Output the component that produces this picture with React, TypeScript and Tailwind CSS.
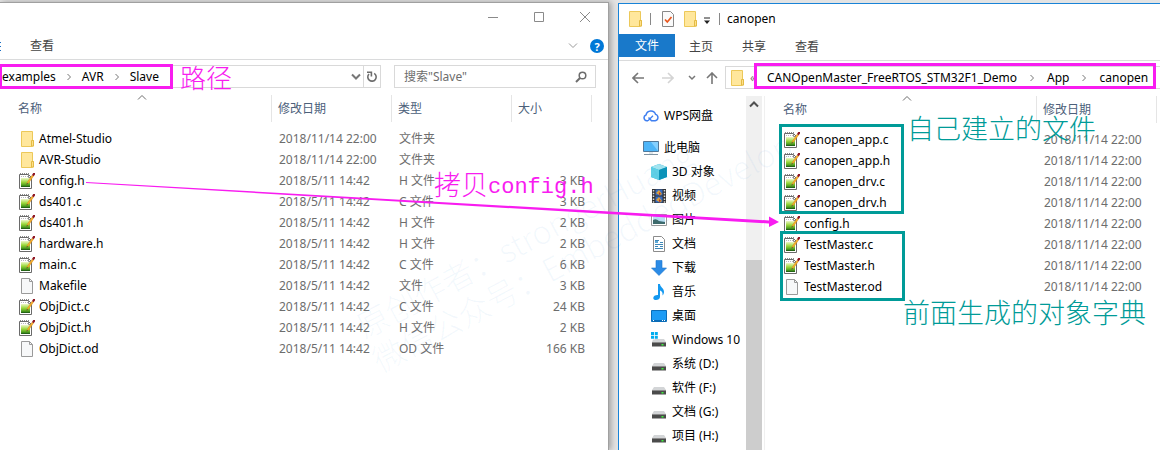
import type { ReactNode } from "react";

type Kind = "folder" | "code" | "page";
type FileRow = { name: string; kind: Kind; date: string; type?: string; size?: string };

const OLD = "2018/5/11 14:42";
const NEW = "2018/11/14 22:00";

const slaveFiles: FileRow[] = [
  { name: "Atmel-Studio", kind: "folder", date: NEW, type: "文件夹", size: "" },
  { name: "AVR-Studio", kind: "folder", date: NEW, type: "文件夹", size: "" },
  { name: "config.h", kind: "code", date: OLD, type: "H 文件", size: "3 KB" },
  { name: "ds401.c", kind: "code", date: OLD, type: "C 文件", size: "3 KB" },
  { name: "ds401.h", kind: "code", date: OLD, type: "H 文件", size: "2 KB" },
  { name: "hardware.h", kind: "code", date: OLD, type: "H 文件", size: "2 KB" },
  { name: "main.c", kind: "code", date: OLD, type: "C 文件", size: "6 KB" },
  { name: "Makefile", kind: "page", date: OLD, type: "文件", size: "3 KB" },
  { name: "ObjDict.c", kind: "code", date: OLD, type: "C 文件", size: "24 KB" },
  { name: "ObjDict.h", kind: "code", date: OLD, type: "H 文件", size: "2 KB" },
  { name: "ObjDict.od", kind: "page", date: OLD, type: "OD 文件", size: "166 KB" },
];

const masterFiles: FileRow[] = [
  { name: "canopen_app.c", kind: "code", date: NEW },
  { name: "canopen_app.h", kind: "code", date: NEW },
  { name: "canopen_drv.c", kind: "code", date: NEW },
  { name: "canopen_drv.h", kind: "code", date: NEW },
  { name: "config.h", kind: "code", date: NEW },
  { name: "TestMaster.c", kind: "code", date: NEW },
  { name: "TestMaster.h", kind: "code", date: NEW },
  { name: "TestMaster.od", kind: "page", date: NEW },
];

function FolderIcon() {
  return (
    <svg width="16" height="18" viewBox="0 0 16 18" className="shrink-0">
      <path d="M2.5 1.5h11v9h1v5.5h-1.5v.5H2.5z" fill="#ffe79c" stroke="#ecc859" />
      <path d="M12.5 16v-5.5h2V16z" fill="#ffe08a" stroke="#e3bb45" />
    </svg>
  );
}

function CodeIcon() {
  return (
    <svg width="16" height="18" viewBox="0 0 16 18" className="shrink-0">
      <defs>
        <linearGradient id="codeInk" x1="0" y1="0" x2="0" y2="1">
          <stop offset="0" stopColor="#eef8c8" />
          <stop offset="0.45" stopColor="#9bd83c" />
          <stop offset="0.8" stopColor="#4f9f1e" />
          <stop offset="1" stopColor="#134d12" />
        </linearGradient>
      </defs>
      <path d="M.5 2.500h9l3 3v11H.5z" fill="#fff" stroke="#6a6a6a" />
      <path d="M1 1.500h1M3 1.500h1M5 1.500h1M7 1.500h1M9 1.500h1" stroke="#8a8a8a" />
      <path d="M2 4.500h1M4 4.500h1M6 4.500h1M8 4.500h1" stroke="#b9b9b9" />
      <path d="M9.500 2.500v3h3" fill="none" stroke="#8a8a8a" />
      <path d="M2 6h9v9H2z" fill="url(#codeInk)" />
      <path d="M7.700 12l.8-2L13 3.200l1.500 1-4.700 6.600z" fill="#f8b02c" stroke="#c98216" strokeWidth=".4" />
      <path d="M7.500 12.800l.4-1.800 1.200.8z" fill="#444" />
      <path d="M13 3l1.200-2H16v1.500l-1.300 1.800z" fill="#8e1522" />
    </svg>
  );
}

function PageIcon() {
  return (
    <svg width="16" height="18" viewBox="0 0 16 18" className="shrink-0">
      <path d="M2.500 1.500h8l3 3v12h-11z" fill="#f7f8f9" stroke="#9a9a9a" />
      <path d="M10.500 1.500v3h3" fill="none" stroke="#9a9a9a" />
    </svg>
  );
}

function KindIcon({ kind }: { kind: Kind }) {
  if (kind === "folder") return <FolderIcon />;
  if (kind === "code") return <CodeIcon />;
  return <PageIcon />;
}

function Chevron({ d = "down", className }: { d?: "down" | "right" | "up"; className?: string }) {
  const path = d === "down" ? "M1 2.500l4 4 4-4" : d === "up" ? "M1 6.500l4-4 4 4" : "M3.500 2l3 3-3 3";
  return (
    <svg width="10" height="10" viewBox="0 0 10 10" className={className}>
      <path d={path} fill="none" stroke="currentColor" />
    </svg>
  );
}

function FileTable({ rows, full }: { rows: FileRow[]; full?: boolean }) {
  const th = "relative border-r border-[#e5e5e5] px-[6px] text-left font-normal text-[#4c607a]";
  return (
    <table className={full ? "w-[580px] table-fixed border-separate border-spacing-0" : "w-[380px] table-fixed border-separate border-spacing-0"}>
      <colgroup>
        <col className="w-[260px]" />
        <col className="w-[120px]" />
        {full && <col className="w-[120px]" />}
        {full && <col className="w-[80px]" />}
      </colgroup>
      <thead>
        <tr className="h-[27px]">
          <th className={th}>
            名称
            <Chevron d="up" className="absolute left-1/2 top-[-2px] -translate-x-1/2 text-[#6d6d6d]" />
          </th>
          <th className={th}>修改日期</th>
          {full && <th className={th}>类型</th>}
          {full && <th className={th}>大小</th>}
        </tr>
      </thead>
      <tbody className="before:block before:h-[6px]">
        {rows.map((r) => (
          <tr key={r.name} className="h-[21px] leading-5 text-[#6d6d6d]">
            <td className="p-0 pl-[7px]">
              <span className="flex items-center gap-1 text-black">
                <KindIcon kind={r.kind} />
                {r.name}
              </span>
            </td>
            <td className="p-0 pl-[7px]">{r.date}</td>
            {full && <td className="p-0 pl-[7px]">{r.type}</td>}
            {full && <td className="p-0 pr-[7px] text-right">{r.size}</td>}
          </tr>
        ))}
      </tbody>
    </table>
  );
}

function SlaveWindow() {
  return (
    <section className="relative flex min-w-0 flex-col border-r border-t border-[#a0a0a0] bg-white shadow-[2px_0_6px_rgba(0,0,0,0.3)]">
      <div className="flex h-7 items-center justify-end gap-9 pr-[18px] text-[#8a8a8a]">
        <button aria-label="最小化">
          <svg width="10" height="10" viewBox="0 0 10 10"><path d="M0 5.500h10" stroke="currentColor" /></svg>
        </button>
        <button aria-label="最大化">
          <svg width="10" height="10" viewBox="0 0 10 10"><path d="M.5.5h9v9h-9z" fill="none" stroke="currentColor" /></svg>
        </button>
        <button aria-label="关闭">
          <svg width="10" height="10" viewBox="0 0 10 10"><path d="M0 0l10 10M10 0L0 10" stroke="currentColor" /></svg>
        </button>
      </div>
      <div className="flex h-[29px] items-center border-b border-[#dadbdc] pr-1 pt-[2px]">
        <svg width="2" height="12" viewBox="0 0 2 12"><path d="M0 2.500h1M0 6.500h1M0 10.500h1" stroke="#1a6fc4" /></svg>
        <button className="ml-7 text-[#444]">查看</button>
        <Chevron className="ml-auto mr-3 text-[#9a9a9a]" />
        <button aria-label="帮助" className="flex size-[14px] items-center justify-center rounded-full bg-[#0078d7] text-[11px] font-bold leading-none text-white">?</button>
      </div>
      <div className="flex gap-[13px] pb-[7px] pr-3 pt-[5px]">
        <nav className="flex h-[23px] min-w-0 flex-1 items-center border border-l-0 border-[#d9d9d9] pl-[2px] text-black">
          <a href="#examples">examples</a>
          <Chevron d="right" className="ml-2 mr-2 text-[#777]" />
          <a href="#avr">AVR</a>
          <Chevron d="right" className="ml-2 mr-2 text-[#777]" />
          <a href="#slave">Slave</a>
          <button aria-label="历史" className="ml-auto mr-[2px]"><Chevron className="text-[#777] [&_path]:stroke-2" /></button>
          <button aria-label="刷新" className="flex h-full w-[17px] items-center justify-center border-l border-[#d9d9d9] text-[#6d6d6d]">
            <svg width="12" height="12" viewBox="0 0 12 12">
              <path d="M8.200 2.400A4.200 4.200 0 1 1 3 3" fill="none" stroke="currentColor" strokeWidth="1.600" />
              <path d="M1 1.200h4.400v4.200" fill="none" stroke="currentColor" strokeWidth="1.600" />
            </svg>
          </button>
        </nav>
        <label className="flex h-[23px] w-[202px] items-center border border-[#d9d9d9] pl-[9px] pr-2">
          <input aria-label="搜索" placeholder={'搜索"Slave"'} className="min-w-0 flex-1 bg-transparent outline-none placeholder:text-[#6d6d6d]" />
          <svg width="12" height="12" viewBox="0 0 12 12" className="text-[#6d6d6d]">
            <circle cx="7.500" cy="4.500" r="3.300" fill="none" stroke="currentColor" strokeWidth="1.500" />
            <path d="M5 7L1 11" stroke="currentColor" strokeWidth="2" />
          </svg>
        </label>
      </div>
      <div className="ml-3"><FileTable rows={slaveFiles} full /></div>
      <div className="pointer-events-none absolute left-[-1px] top-[61px] h-[25px] w-[174px] border-[3px] border-[#f81cf0]" />
      <p className="absolute left-[180px] top-[59px] text-[26px] font-light leading-8 text-[#f81cf0]">路径</p>
    </section>
  );
}

function Drive({ win }: { win?: boolean }) {
  return (
    <svg width="16" height="16" viewBox="0 0 16 16">
      {win && <path d="M0 0h3v3H0zM3.800 0h3v3h-3zM0 3.800h3v3H0zM3.800 3.800h3v3h-3z" fill="#00adef" />}
      <path d={win ? "M4 7h9l2 3H1l1-2.500h2z" : "M3 7h10l2 3H1z"} fill="#d3d5d7" />
      <path d="M1 10h14v4.500H1z" fill="#4b4b4b" />
      <path d="M1 10.500h14" stroke="#8b8b8b" />
      <path d="M10.500 12h2v1.500h-2z" fill="#3cf03c" />
    </svg>
  );
}

const places: { label: string; icon: ReactNode }[] = [
  {
    label: "3D 对象",
    icon: (
      <svg width="16" height="16" viewBox="0 0 16 16">
        <path d="M0 3l8-3 8 3v10l-8 3-8-3z" fill="#28b5d4" />
        <path d="M0 3l8-3 8 3-8 3z" fill="#a2e4f0" />
        <path d="M8 6l8-3v10l-8 3z" fill="#0b93b8" />
        <path d="M0 3l8 3v10l-8-3z" fill="#5fd0e6" />
      </svg>
    ),
  },
  {
    label: "视频",
    icon: (
      <svg width="16" height="16" viewBox="0 0 16 16">
        <path d="M1 1h14v14H1z" fill="#333" />
        <path d="M2.500 2v13M13.500 2v13" stroke="#ddd" strokeWidth="1.500" strokeDasharray="1.500 1.300" />
        <path d="M4.500 1.500h7v6h-7z" fill="#376cc4" />
        <path d="M4.500 8.500h7v6h-7z" fill="#376cc4" />
        <path d="M5 5l3-3 3 4-2 1.500zM5 12l3-3 3 4-2 1.500z" fill="#d9a13b" />
        <path d="M8 4l2 2-2 1zM8 11l2 2-2 1z" fill="#b6332c" />
      </svg>
    ),
  },
  {
    label: "图片",
    icon: (
      <svg width="16" height="16" viewBox="0 0 16 16">
        <path d="M.5 2.500h15v11H.5z" fill="#fff" stroke="#999" />
        <path d="M2 4h12v8H2z" fill="#b9dff2" />
        <path d="M2 8q3-2 6 1l6 1v2H2z" fill="#3d6a6c" />
      </svg>
    ),
  },
  {
    label: "文档",
    icon: (
      <svg width="16" height="16" viewBox="0 0 16 16">
        <path d="M2.500.5h8l3 3v12h-11z" fill="#fff" stroke="#8c8c8c" />
        <path d="M4 4.500h4M9 6.500h3M4 8.500h8M4 10.500h3M9 10.500h3M4 12.500h8" stroke="#3d88b8" />
        <path d="M4 5h3v2H4z" fill="#5ba8d6" />
      </svg>
    ),
  },
  {
    label: "下载",
    icon: (
      <svg width="16" height="16" viewBox="0 0 16 16">
        <path d="M5 .5h6V8h4.500L8 15.500.5 8H5z" fill="#2b8be6" stroke="#1b76cd" strokeWidth=".6" />
      </svg>
    ),
  },
  {
    label: "音乐",
    icon: (
      <svg width="16" height="16" viewBox="0 0 16 16">
        <path d="M7 0h2c0 3 4 4 4 8 0 1-.5 2.500-1.500 3.500C12 8 10.500 7 9 6.500V13c0 1.800-2 3-4 3-1.600 0-2.700-.8-2.700-2.100C2.300 12 4.500 10.800 7 11z" fill="#1398f0" />
      </svg>
    ),
  },
  {
    label: "桌面",
    icon: (
      <svg width="16" height="16" viewBox="0 0 16 16">
        <path d="M.5 2.500h15v11H.5z" fill="#1c9bf5" stroke="#0b6db8" />
        <path d="M1 12.500h14" stroke="#0a6cb8" />
        <path d="M2 12.500h1M11 12.500h1M13 12.500h1" stroke="#fff" />
      </svg>
    ),
  },
  { label: "Windows 10", icon: <Drive win /> },
  { label: "系统 (D:)", icon: <Drive /> },
  { label: "软件 (F:)", icon: <Drive /> },
  { label: "文档 (G:)", icon: <Drive /> },
  { label: "项目 (H:)", icon: <Drive /> },
];

function Sidebar() {
  return (
    <aside className="flex w-[146px] shrink-0 border-r border-[#f0f0f0]">
      <div className="w-[127px] overflow-hidden whitespace-nowrap pt-2 text-black">
        <a href="#wps" className="flex h-6 items-center gap-[5px] pl-6">
          <svg width="16" height="16" viewBox="0 0 16 16">
            <path d="M5 12.800H3.800A3 3 0 0 1 3 7a5 5 0 0 1 9.600-.6 3.300 3.300 0 0 1-.4 6.400H8.500L5.500 9.500" fill="none" stroke="#3f7ff0" strokeWidth="1.500" strokeLinejoin="round" />
            <path d="M5 12.800l5-5" fill="none" stroke="#3f7ff0" strokeWidth="1.300" />
          </svg>
          WPS网盘
        </a>
        <a href="#pc" className="mt-2 flex h-6 items-center gap-[5px] pl-6">
          <svg width="16" height="16" viewBox="0 0 16 16">
            <path d="M.5 1.500h15v10H.5z" fill="#4db5f8" stroke="#50789a" />
            <path d="M8 2h7v9z" fill="#84d0ff" />
            <path d="M6 12h4v2H6z" fill="#dfe6ea" />
            <path d="M1 14.500h14" stroke="#7f93a2" />
          </svg>
          此电脑
        </a>
        {places.map((p) => (
          <a key={p.label} href="#place" className="flex h-6 items-center gap-[5px] pl-8">
            {p.icon}
            {p.label}
          </a>
        ))}
      </div>
      <div className="flex w-[16px] flex-col bg-[#cdcdcd]">
        <div className="flex h-[164px] justify-center bg-[#f0f0f0] pt-1">
          <Chevron d="up" className="text-[#505050] [&_path]:stroke-2" />
        </div>
      </div>
    </aside>
  );
}

function MasterWindow() {
  return (
    <section className="relative mt-px flex min-w-0 flex-col overflow-hidden border-l border-t border-[#1883d7] bg-white">
      <div className="flex h-[30px] items-center pl-2">
        <FolderIcon />
        <span className="ml-[7px] h-3 w-px bg-[#888]" />
        <svg width="14" height="16" viewBox="0 0 14 16" className="ml-[10px]">
          <path d="M1.500.5h8l3 3v12h-11z" fill="#fafafa" stroke="#888" />
          <path d="M4 8.500l2.300 2.500L10.500 6" fill="none" stroke="#e8561d" strokeWidth="1.700" />
        </svg>
        <span className="ml-[7px] flex"><FolderIcon /></span>
        <svg width="8" height="8" viewBox="0 0 8 8" className="ml-[5px] mt-1">
          <path d="M1 1h6" stroke="#222" />
          <path d="M1 3.500h6L4 7z" fill="#222" />
        </svg>
        <span className="ml-2 h-3 w-px bg-[#888]" />
        <span className="ml-[7px] text-black">canopen</span>
      </div>
      <div className="flex h-[27px] items-start border-b border-[#dadbdc] leading-6 text-[#444]">
        <button className="h-[23px] w-14 bg-[#1979ca] text-white">文件</button>
        <button className="ml-[14px] pt-px">主页</button>
        <button className="ml-[29px] pt-px">共享</button>
        <button className="ml-[29px] pt-px">查看</button>
      </div>
      <div className="flex pb-[7px] pl-[13px] pt-[5px]">
        <div className="flex w-[93px] items-center text-[#777]">
          <svg width="12" height="12" viewBox="0 0 12 12"><path d="M12 6H1M6 1L1 6l5 5" fill="none" stroke="currentColor" strokeWidth="1.600" /></svg>
          <svg width="12" height="12" viewBox="0 0 12 12" className="ml-[18px] text-[#d4d4d4]"><path d="M0 6h11M6 1l5 5-5 5" fill="none" stroke="currentColor" strokeWidth="1.600" /></svg>
          <svg width="8" height="8" viewBox="0 0 8 8" className="ml-[14px]"><path d="M1 2l3 3 3-3" fill="none" stroke="currentColor" strokeWidth="1.500" /></svg>
          <svg width="12" height="12" viewBox="0 0 12 12" className="ml-[10px]"><path d="M6 12V1M1 6l5-5 5 5" fill="none" stroke="currentColor" strokeWidth="1.600" /></svg>
        </div>
        <nav className="flex h-[23px] min-w-0 flex-1 items-center whitespace-nowrap border border-r-0 border-[#d9d9d9] pl-[3px] text-black">
          <FolderIcon />
          <span className="ml-[5px] w-[17px] text-[#777]">«</span>
          <a href="#demo">CANOpenMaster_FreeRTOS_STM32F1_Demo</a>
          <Chevron d="right" className="ml-[10px] mr-[10px] text-[#777]" />
          <a href="#app">App</a>
          <Chevron d="right" className="ml-[10px] mr-[10px] text-[#777]" />
          <a href="#canopen">canopen</a>
        </nav>
      </div>
      <div className="flex h-[354px]">
        <Sidebar />
        <div className="relative min-w-0 flex-1 pl-3">
          <FileTable rows={masterFiles} />
          <div className="absolute left-[14px] top-[28px] h-[90px] w-[125px] border-[3px] border-[#009b98]" />
          <div className="absolute left-[15px] top-[135px] h-[70px] w-[125px] border-[3px] border-[#009b98]" />
          <p className="absolute left-[142px] top-[17px] whitespace-nowrap text-[27px] font-light leading-8 text-[#009b98]">自己建立的文件</p>
          <p className="absolute left-[138px] top-[201px] whitespace-nowrap text-[27px] font-light leading-8 text-[#009b98]">前面生成的对象字典</p>
        </div>
      </div>
      <div className="pointer-events-none absolute left-[135px] top-[59px] h-[26px] w-[402px] border-[3px] border-[#f81cf0]" />
    </section>
  );
}

export default function App() {
  return (
    <main className="relative grid h-screen min-h-[450px] grid-cols-[609fr_542fr] gap-[9px] overflow-hidden bg-[#e3e3e3] pt-[2px] font-['Noto_Sans','Noto_Sans_CJK_SC',sans-serif] text-xs">
      <SlaveWindow />
      <MasterWindow />
      <div className="pointer-events-none absolute inset-0 font-['Noto_Sans_CJK_SC',sans-serif] text-[32px] font-light leading-10 text-[#3c82d2]/6">
        <p className="absolute left-[358px] top-[307px] origin-left rotate-[-28deg] whitespace-nowrap">原创作者：strongerHuang</p>
        <p className="absolute left-[374px] top-[341px] origin-left rotate-[-28deg] whitespace-nowrap">微信公众号：EmbeddedDevelop</p>
      </div>
      <svg width="700" height="60" viewBox="0 0 700 60" className="pointer-events-none absolute left-[84px] top-[174px]">
        <path d="M2 8L685 46.500v3L2 9z" fill="#f81cf0" />
        <path d="M685 42.500l10 5.500-10 5z" fill="#f81cf0" />
      </svg>
      <p className="absolute left-[434px] top-[172px] flex items-center whitespace-nowrap font-['Liberation_Mono','Noto_Sans_CJK_SC',monospace] text-[#f81cf0]">
        <span className="text-[27px] font-light leading-8">拷贝</span>
        <span className="text-[22px] leading-8">config.h</span>
      </p>
    </main>
  );
}
